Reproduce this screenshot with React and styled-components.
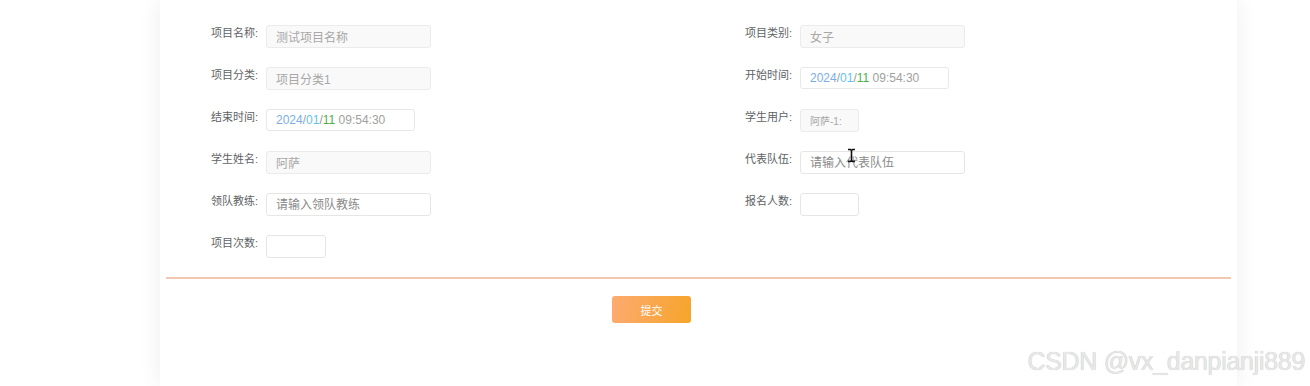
import React from "react";
import styled, { createGlobalStyle } from "styled-components";

const GlobalStyle = createGlobalStyle`
  html, body { margin: 0; padding: 0; background: #ffffff; }
  body { font-family: "Liberation Sans", "Noto Sans CJK SC", sans-serif; }
  * { box-sizing: border-box; }
`;

const Page = styled.div`
  position: relative;
  height: 386px;
  overflow: hidden;
`;

const Card = styled.div`
  margin-left: 160px;
  width: 1077px;
  height: 386px;
  background: #fff;
  box-shadow: 0 0 22px rgba(0, 0, 0, 0.07);
  padding: 25px 6px 0 6px;
`;

const FormGrid = styled.div`
  display: grid;
  padding-left: 8px;
  grid-template-columns: 534px 534px;
  grid-auto-rows: 42px;
`;

const Field = styled.div`
  display: flex;
  align-items: flex-start;
`;

const Label = styled.label`
  width: 92px;
  padding-right: 8px;
  padding-top: 1px;
  text-align: right;
  font-size: 11px;
  line-height: 14px;
  color: #606266;
  white-space: nowrap;
`;

const Input = styled.input`
  width: ${(p) => p.$w}px;
  height: 23px;
  border: 1px solid #e6e6e6;
  border-radius: 3px;
  padding: 0 9px;
  font-family: inherit;
  font-size: ${(p) => p.$fs || 12}px;
  color: #606266;
  background: ${(p) => (p.disabled ? "#f9f9f9" : "#fff")};
  outline: none;
  &:disabled { color: #a8a8a8; -webkit-text-fill-color: #a8a8a8; border-color: #ebebeb; }
  &::placeholder { color: #8a8a8a; }
`;

const DateBox = styled.div`
  width: 149px;
  height: 22px;
  border: 1px solid #e8e8e8;
  border-radius: 3px;
  padding: 0 9px;
  font-size: 12px;
  line-height: 20px;
  color: #a0a0a0;
  white-space: nowrap;
`;

const Seg = styled.span`
  color: ${(p) => p.$c};
`;

const Divider = styled.div`
  height: 2px;
  background: #f3c8b2;
`;

const Footer = styled.div`
  display: flex;
  padding: 17px 0 0 446px;
`;

const SubmitButton = styled.button`
  width: 79px;
  height: 27px;
  border: none;
  border-radius: 3px;
  background: linear-gradient(100deg, #fdaa71 0%, #f6a52a 100%);
  color: #fff;
  font-family: inherit;
  font-size: 11px;
  cursor: pointer;
`;

const Watermark = styled.div`
  position: absolute;
  right: 5px;
  top: 347px;
  font-size: 25px;
  letter-spacing: -0.3px;
  color: #e8e8e8;
  text-shadow: 0 0 0.7px #b0b0b0;
  white-space: nowrap;
  pointer-events: none;
`;

const Cursor = styled.svg`
  position: absolute;
  left: 847px;
  top: 148px;
  pointer-events: none;
`;

function DateValue() {
  return (
    <DateBox>
      <Seg $c="#7aaee8">2024</Seg>
      <Seg $c="#9a9a9a">/</Seg>
      <Seg $c="#5fc3f0">01</Seg>
      <Seg $c="#9a9a9a">/</Seg>
      <Seg $c="#4db04a">11</Seg>
      <Seg $c="#a0a0a0"> 09:54:30</Seg>
    </DateBox>
  );
}

export default function App() {
  return (
    <Page>
      <GlobalStyle />
      <Card>
        <FormGrid>
          <Field>
            <Label>项目名称:</Label>
            <Input $w={165} disabled value="测试项目名称" readOnly />
          </Field>
          <Field>
            <Label>项目类别:</Label>
            <Input $w={165} disabled value="女子" readOnly />
          </Field>
          <Field>
            <Label>项目分类:</Label>
            <Input $w={165} disabled value="项目分类1" readOnly />
          </Field>
          <Field>
            <Label>开始时间:</Label>
            <DateValue />
          </Field>
          <Field>
            <Label>结束时间:</Label>
            <DateValue />
          </Field>
          <Field>
            <Label>学生用户:</Label>
            <Input $w={59} $fs={10} disabled value="阿萨-1:" readOnly />
          </Field>
          <Field>
            <Label>学生姓名:</Label>
            <Input $w={165} disabled value="阿萨" readOnly />
          </Field>
          <Field>
            <Label>代表队伍:</Label>
            <Input $w={165} placeholder="请输入代表队伍" />
          </Field>
          <Field>
            <Label>领队教练:</Label>
            <Input $w={165} placeholder="请输入领队教练" />
          </Field>
          <Field>
            <Label>报名人数:</Label>
            <Input $w={59} />
          </Field>
          <Field>
            <Label>项目次数:</Label>
            <Input $w={60} />
          </Field>
        </FormGrid>
        <Divider />
        <Footer>
          <SubmitButton>提交</SubmitButton>
        </Footer>
      </Card>
      <Cursor width="9" height="15" viewBox="0 0 9 15">
        <path d="M1 1.5h2.5L4.5 2.5 5.5 1.5H8M4.5 2.5v10M1 13.5h2.5l1-1 1 1H8" stroke="#111" strokeWidth="1.6" fill="none" />
      </Cursor>
      <Watermark>CSDN @vx_danpianji889</Watermark>
    </Page>
  );
}
